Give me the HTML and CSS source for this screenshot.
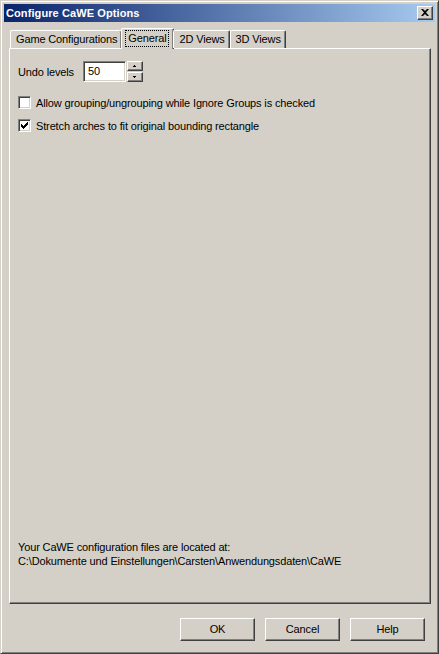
FILE: index.html
```html
<!DOCTYPE html>
<html>
<head>
<meta charset="utf-8">
<link rel="stylesheet" href="styles.css">
</head>
<body>
<div class="window">
  <div class="titlebar">
    <span class="title">Configure CaWE Options</span>
    <div class="close">
      <svg width="8" height="7" viewBox="0 0 8 7"><path d="M0 0h2l2 2 2-2h2L5 3.5 8 7H6L4 5 2 7H0l3-3.5z" fill="#000"/></svg>
    </div>
  </div>
  <div class="body">
    <div class="tabs">
      <div class="tab">Game Configurations</div>
      <div class="tab active"><span class="focus">General</span></div>
      <div class="tab">2D Views</div>
      <div class="tab">3D Views</div>
    </div>
    <div class="panel">
      <div class="row undo">
        <span class="lbl">Undo levels</span>
        <div class="spin">
          <div class="edit">50</div>
          <div class="spinbtns">
            <div class="sbtn"><svg width="3" height="2" viewBox="0 0 3 2"><path d="M1 0h1v1h1v1H0V1h1z" fill="#000"/></svg></div>
            <div class="sbtn"><svg width="3" height="2" viewBox="0 0 3 2"><path d="M0 0h3v1H2v1H1V1H0z" fill="#000"/></svg></div>
          </div>
        </div>
      </div>
      <div class="check first">
        <div class="box"></div>
        <span>Allow grouping/ungrouping while Ignore Groups is checked</span>
      </div>
      <div class="check">
        <div class="box"><svg width="7" height="7" viewBox="0 0 7 7"><path d="M0 2h1v1h1v1h1V3h1V2h1V1h1V0h1v3H6v1H5v1H4v1H3v1H2V6H1V5H0z" fill="#000"/></svg></div>
        <span>Stretch arches to fit original bounding rectangle</span>
      </div>
      <div class="spacer"></div>
      <div class="info">Your CaWE configuration files are located at:<br>C:\Dokumente und Einstellungen\Carsten\Anwendungsdaten\CaWE</div>
    </div>
    <div class="buttons">
      <div class="btn">OK</div>
      <div class="btn">Cancel</div>
      <div class="btn">Help</div>
    </div>
  </div>
</div>
</body>
</html>
```
FILE: styles.css
```css
html, body {
  margin: 0;
  padding: 0;
  background: #D4D0C8;
}
body {
  font-family: "Liberation Sans", Arial, sans-serif;
  font-size: 11px;
  letter-spacing: -0.14px;
  color: #000;
}
.window {
  box-sizing: border-box;
  width: 439px;
  height: 654px;
  background: #D4D0C8;
  border-top: 1px solid #D4D0C8;
  border-left: 1px solid #D4D0C8;
  border-right: 1px solid #404040;
  border-bottom: 1px solid #404040;
  box-shadow: inset 1px 1px 0 #fff, inset -1px -1px 0 #808080;
  padding: 3px;
  display: flex;
  flex-direction: column;
}
.titlebar {
  height: 18px;
  background: linear-gradient(to right, #0A246A, #A6CAF0);
  display: flex;
  align-items: center;
  justify-content: space-between;
  padding: 0 2px 0 2px;
  flex: none;
}
.title {
  color: #fff;
  font-weight: bold;
  font-size: 11px;
  letter-spacing: 0.1px;
}
.close {
  box-sizing: border-box;
  width: 16px;
  height: 14px;
  background: #D4D0C8;
  border-top: 1px solid #fff;
  border-left: 1px solid #fff;
  border-right: 1px solid #404040;
  border-bottom: 1px solid #404040;
  box-shadow: inset -1px -1px 0 #808080;
  display: flex;
  align-items: center;
  justify-content: center;
  padding: 0 1px 1px 0;
}
.body {
  flex: 1;
  display: flex;
  flex-direction: column;
  padding: 5px 4px 11px 5px;
}
.tabs {
  display: flex;
  align-items: flex-end;
  height: 21px;
  padding-left: 1px;
  position: relative;
  z-index: 1;
}
.tab {
  box-sizing: border-box;
  height: 18px;
  padding: 0 4px 0 5px;
  line-height: 17px;
  border-top: 1px solid #fff;
  border-left: 1px solid #fff;
  border-right: 1px solid #404040;
  box-shadow: inset -1px 0 0 #808080;
  border-top-left-radius: 2px;
  border-top-right-radius: 2px;
  margin-bottom: 0;
  white-space: nowrap;
}
.tab.active {
  height: 21px;
  margin-left: -1px;
  margin-right: -1px;
  margin-bottom: -1px;
  padding: 2px 5px 0 4px;
  background: #D4D0C8;
  line-height: 15px;
}
.focus {
  display: inline-block;
  outline: 1px dotted #000;
  outline-offset: 0;
  padding: 0 2px;
  line-height: 15px;
}
.panel {
  box-sizing: border-box;
  height: 556px;
  border-top: 1px solid #fff;
  border-left: 1px solid #fff;
  border-right: 1px solid #404040;
  border-bottom: 1px solid #404040;
  box-shadow: inset -1px -1px 0 #808080;
  padding: 12px 8px 35px 8px;
  display: flex;
  flex-direction: column;
}
.row.undo {
  display: flex;
  align-items: center;
  gap: 9px;
  height: 21px;
}
.spin {
  display: flex;
  align-items: center;
  gap: 1px;
}
.edit {
  box-sizing: border-box;
  width: 43px;
  height: 21px;
  background: #fff;
  border-top: 1px solid #808080;
  border-left: 1px solid #808080;
  border-right: 1px solid #fff;
  border-bottom: 1px solid #fff;
  box-shadow: inset 1px 1px 0 #404040, inset -1px -1px 0 #D4D0C8;
  padding: 2px 4px;
  line-height: 15px;
}
.spinbtns {
  display: flex;
  flex-direction: column;
  gap: 1px;
  padding-top: 0;
}
.sbtn {
  box-sizing: border-box;
  width: 16px;
  height: 10px;
  border-top: 1px solid #fff;
  border-left: 1px solid #fff;
  border-right: 1px solid #404040;
  border-bottom: 1px solid #404040;
  box-shadow: inset -1px -1px 0 #808080;
  display: flex;
  align-items: center;
  justify-content: center;
  padding: 0 1px 1px 0;
}
.sbtn svg { display: block; }
.check {
  display: flex;
  align-items: center;
  gap: 5px;
  height: 13px;
  margin-top: 10px;
}
.check.first {
  margin-top: 14px;
}
.box {
  box-sizing: border-box;
  width: 13px;
  height: 13px;
  background: #fff;
  border-top: 1px solid #808080;
  border-left: 1px solid #808080;
  border-right: 1px solid #fff;
  border-bottom: 1px solid #fff;
  box-shadow: inset 1px 1px 0 #404040, inset -1px -1px 0 #D4D0C8;
  display: flex;
  align-items: center;
  justify-content: center;
  flex: none;
}
.box svg { display: block; }
.spacer { flex: 1; }
.info {
  line-height: 14px;
}
.buttons {
  display: flex;
  justify-content: flex-end;
  gap: 10px;
  margin-top: 14px;
  padding-right: 6px;
}
.btn {
  box-sizing: border-box;
  width: 75px;
  height: 23px;
  border-top: 1px solid #fff;
  border-left: 1px solid #fff;
  border-right: 1px solid #404040;
  border-bottom: 1px solid #404040;
  box-shadow: inset -1px -1px 0 #808080;
  display: flex;
  align-items: center;
  justify-content: center;
  padding-bottom: 1px;
}
```
